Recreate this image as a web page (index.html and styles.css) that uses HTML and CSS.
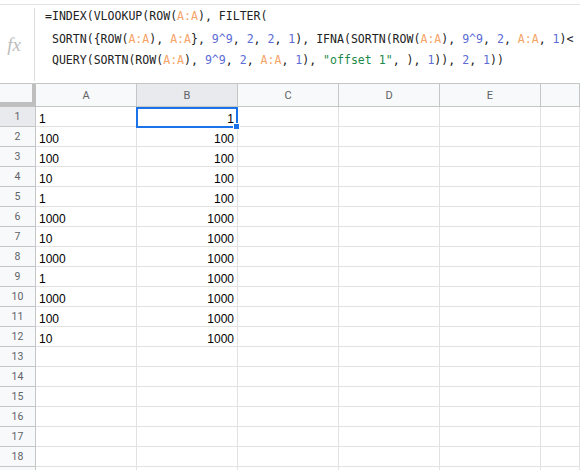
FILE: index.html
```html
<!DOCTYPE html>
<html>
<head>
<meta charset="utf-8">
<link rel="stylesheet" href="styles.css">
</head>
<body>
<div class="app">
  <div class="formula-bar">
    <div class="fx">fx</div>
    <div class="sep"></div>
    <div class="ftext">
      <div class="fl l1">=INDEX(VLOOKUP(ROW(<span class="r">A:A</span>), FILTER(</div>
      <div class="fl l2"> SORTN({ROW(<span class="r">A:A</span>), <span class="r">A:A</span>}, <span class="n">9^9</span>, <span class="n">2</span>, <span class="n">2</span>, <span class="n">1</span>), IFNA(SORTN(ROW(<span class="r">A:A</span>), <span class="n">9^9</span>, <span class="n">2</span>, <span class="r">A:A</span>, <span class="n">1</span>)&lt;</div>
      <div class="fl l3"> QUERY(SORTN(ROW(<span class="r">A:A</span>), <span class="n">9^9</span>, <span class="n">2</span>, <span class="r">A:A</span>, <span class="n">1</span>), <span class="s">"offset 1"</span>, ), <span class="n">1</span>)), <span class="n">2</span>, <span class="n">1</span>))</div>
    </div>
  </div>
  <div class="sheet" id="sheet">
    <div class="corner"></div>
    <div class="ch">A</div>
    <div class="ch sel">B</div>
    <div class="ch">C</div>
    <div class="ch">D</div>
    <div class="ch">E</div>
    <div class="ch last"></div>
  </div>
</div>
<script src="script.js"></script>
</body>
</html>
```

FILE: script.js
```js
(function () {
  var a = ["1", "100", "100", "10", "1", "1000", "10", "1000", "1", "1000", "100", "10"];
  var b = ["1", "100", "100", "100", "100", "1000", "1000", "1000", "1000", "1000", "1000", "1000"];
  var sheet = document.getElementById("sheet");
  var html = "";
  for (var i = 0; i < 19; i++) {
    var r = i + 1;
    var label = r <= 18 ? String(r) : "";
    html += '<div class="rh' + (r === 1 ? ' sel' : '') + '">' + label + '</div>';
    html += '<div class="c">' + (a[i] || "") + '</div>';
    if (r === 1) {
      html += '<div class="c num active">' + (b[i] || "") + '<div class="selbox"></div><div class="handle"></div></div>';
    } else {
      html += '<div class="c num">' + (b[i] || "") + '</div>';
    }
    html += '<div class="c"></div><div class="c"></div><div class="c"></div><div class="c last"></div>';
  }
  sheet.insertAdjacentHTML("beforeend", html);
})();
```

FILE: styles.css
```css
html, body {
  margin: 0;
  padding: 0;
  background: #fff;
}
.app {
  width: 580px;
  height: 470px;
  overflow: hidden;
}
.formula-bar {
  margin-top: 4px;
  height: 79px;
  border-top: 1px solid #e3e3e3;
  display: flex;
  box-sizing: border-box;
}
.fx {
  width: 34px;
  display: flex;
  align-items: center;
  justify-content: center;
  padding-top: 2px;
  font-family: "Liberation Serif", serif;
  font-style: italic;
  font-size: 19px;
  color: #bdbdbd;
  box-sizing: border-box;
  padding-right: 6px;
}
.sep {
  width: 1px;
  background: #dadce0;
  margin: 3px 0 2px 0;
}
.ftext {
  flex: 1;
  padding-left: 10px;
  padding-top: 1px;
  overflow: hidden;
  font-family: "DejaVu Sans Mono", monospace;
  font-size: 11.55px;
  color: #222;
}
.fl {
  white-space: pre;
  line-height: 21px;
}
.l1 { line-height: 20px; }
.l2 { margin-top: 3px; }
.r { color: #f5a468; }
.n { color: #5b6bd3; }
.s { color: #1e8a4a; }

.sheet {
  display: grid;
  grid-template-columns: 36px repeat(5, 101px) 1fr;
  grid-template-rows: 23px;
  grid-auto-rows: 20px;
  border-top: 1px solid #c4c7c5;
}
.corner {
  background: #f8f9fa;
  border-right: 4px solid #bfbfbf;
  border-bottom: 5px solid #bfbfbf;
  box-sizing: border-box;
}
.ch {
  background: #f8f9fa;
  border-right: 1px solid #c4c7c5;
  border-bottom: 1px solid #c4c7c5;
  box-sizing: border-box;
  display: flex;
  align-items: center;
  justify-content: center;
  font-family: Roboto, sans-serif;
  font-size: 11px;
  color: #5f6368;
}
.ch.sel, .rh.sel {
  background: #e8eaed;
}
.rh {
  background: #f8f9fa;
  border-right: 1px solid #c4c7c5;
  border-bottom: 1px solid #c4c7c5;
  box-sizing: border-box;
  display: flex;
  align-items: center;
  justify-content: center;
  font-family: Roboto, sans-serif;
  font-size: 10.5px;
  color: #5f6368;
}
.c {
  border-right: 1px solid #e2e2e2;
  border-bottom: 1px solid #e2e2e2;
  box-sizing: border-box;
  display: flex;
  align-items: flex-end;
  padding: 0 3px 0 3px;
  font-family: "Liberation Sans", Arial, sans-serif;
  font-size: 12px;
  line-height: 14px;
  color: #000;
  white-space: nowrap;
}
.c.num {
  justify-content: flex-end;
}
.active {
  position: relative;
}
.selbox {
  position: absolute;
  left: -1px;
  top: 0;
  width: 102px;
  height: 21px;
  border: 2px solid #1a73e8;
  box-sizing: border-box;
}
.handle {
  position: absolute;
  left: 96px;
  top: 16px;
  width: 5px;
  height: 5px;
  background: #1a73e8;
  border: 1px solid #fff;
}
```
